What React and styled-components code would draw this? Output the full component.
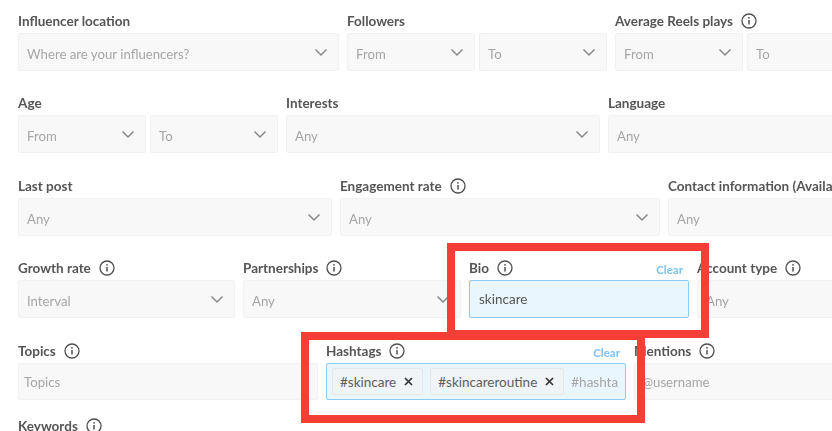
import React from 'react';
import styled, { createGlobalStyle } from 'styled-components';

const GlobalStyle = createGlobalStyle`
  html, body {
    margin: 0;
    padding: 0;
    width: 832px;
    height: 431px;
    overflow: hidden;
    background: #fff;
  }
  body {
    font-family: Lato, "Noto Sans", sans-serif;
  }
`;

const Page = styled.div`
  position: relative;
  width: 832px;
  height: 431px;
  overflow: hidden;
  padding: 12px 0 0 18px;
  box-sizing: border-box;
  display: flex;
  flex-direction: column;
  filter: blur(0.4px);
`;

const Row = styled.div`
  display: flex;
  flex: none;
  gap: 8px;
  height: ${props => props.$height}px;
`;

const Field = styled.div`
  flex: 0 0 ${props => props.$width}px;
  min-width: 0;
  display: flex;
  flex-direction: column;
`;

const LabelRow = styled.div`
  height: 21px;
  flex: none;
  padding-bottom: 3px;
  box-sizing: border-box;
  display: flex;
  align-items: center;
  justify-content: space-between;
`;

const LabelText = styled.span`
  display: flex;
  align-items: center;
  gap: 8px;
  font-size: 13.5px;
  font-weight: 700;
  color: #555;
  white-space: nowrap;
`;

const ClearLink = styled.span`
  font-size: 11.5px;
  font-weight: 700;
  color: #7cc3f6;
  margin: 2px 6px 0 0;
`;

const Pair = styled.div`
  display: grid;
  grid-template-columns: 1fr 1fr;
  gap: 4px;
`;

const Box = styled.div`
  height: ${props => props.$height || 38}px;
  flex: none;
  min-width: 0;
  box-sizing: border-box;
  display: flex;
  align-items: center;
  justify-content: space-between;
  padding: ${props => (props.$height || props.$active ? 0 : 3)}px 10px 0 ${props => props.$inset || 8}px;
  background: ${props => (props.$active ? '#eaf6fe' : '#f8f8f8')};
  border: 1px solid ${props => (props.$active ? '#8ccbf5' : '#f1f1f1')};
  border-radius: 2px;
  font-size: ${props => (props.$active ? 13.5 : 13.2)}px;
  color: ${props => (props.$active ? '#555' : '#a6a6a6')};
  overflow: hidden;
  white-space: nowrap;
`;

const ChipBox = styled(Box)`
  justify-content: flex-start;
  gap: 7px;
  padding: 0 6px 0 5px;
`;

const Chip = styled.span`
  display: inline-flex;
  align-items: center;
  gap: 8px;
  flex: none;
  height: 27px;
  padding: 0 9px 0 7px;
  box-sizing: border-box;
  background: #f0f4f6;
  border: 1px solid #e4e8ea;
  border-radius: 2px;
  color: #5a5f63;
`;

const Ghost = styled.span`
  flex: 1;
  min-width: 0;
  overflow: hidden;
  color: #a6a6a6;
`;

const Highlight = styled.div`
  position: absolute;
  box-sizing: border-box;
  border: 8px solid #f33f36;
  left: ${props => props.$x}px;
  top: ${props => props.$y}px;
  width: ${props => props.$w}px;
  height: ${props => props.$h}px;
`;

const ChevronIcon = styled.svg`
  flex: none;
  margin-bottom: 3px;
`;

const Info = () => (
  <svg width="16" height="16" viewBox="0 0 16 16" fill="none">
    <circle cx="8" cy="8" r="7" stroke="#4f4f4f" strokeWidth="1.3" />
    <circle cx="8" cy="4.8" r="0.9" fill="#4f4f4f" />
    <path d="M8 7v4.6" stroke="#4f4f4f" strokeWidth="1.5" />
  </svg>
);

const Chevron = () => (
  <ChevronIcon width="14" height="9" viewBox="0 0 14 9" fill="none">
    <path d="M1.5 1.5 7 7l5.5-5.5" stroke="#888" strokeWidth="1.5" />
  </ChevronIcon>
);

const Cross = () => (
  <svg width="9" height="9" viewBox="0 0 9 9" fill="none">
    <path d="M1 1l7 7M8 1L1 8" stroke="#333" strokeWidth="1.7" />
  </svg>
);

const Label = ({ text, info, clear }) => (
  <LabelRow>
    <LabelText>
      {text}
      {info && <Info />}
    </LabelText>
    {clear && <ClearLink>Clear</ClearLink>}
  </LabelRow>
);

const Select = ({ text, noArrow, ...rest }) => (
  <Box {...rest}>
    {text}
    {!noArrow && <Chevron />}
  </Box>
);

const App = () => (
  <>
    <GlobalStyle />
    <Page>
      <Row $height={82}>
        <Field $width={321}>
          <Label text="Influencer location" />
          <Select text="Where are your influencers?" />
        </Field>
        <Field $width={260}>
          <Label text="Followers" />
          <Pair>
            <Select text="From" />
            <Select text="To" />
          </Pair>
        </Field>
        <Field $width={260}>
          <Label text="Average Reels plays" info />
          <Pair>
            <Select text="From" />
            <Select text="To" />
          </Pair>
        </Field>
      </Row>
      <Row $height={83}>
        <Field $width={260}>
          <Label text="Age" />
          <Pair>
            <Select text="From" />
            <Select text="To" />
          </Pair>
        </Field>
        <Field $width={314}>
          <Label text="Interests" />
          <Select text="Any" />
        </Field>
        <Field $width={314}>
          <Label text="Language" />
          <Select text="Any" noArrow />
        </Field>
      </Row>
      <Row $height={82}>
        <Field $width={314}>
          <Label text="Last post" />
          <Select text="Any" />
        </Field>
        <Field $width={320}>
          <Label text="Engagement rate" info />
          <Select text="Any" />
        </Field>
        <Field $width={320}>
          <Label text="Contact information (Available)" />
          <Select text="Any" noArrow />
        </Field>
      </Row>
      <Row $height={83}>
        <Field $width={217}>
          <Label text="Growth rate" info />
          <Select text="Interval" />
        </Field>
        <Field $width={218}>
          <Label text="Partnerships" info />
          <Select text="Any" />
        </Field>
        <Field $width={220}>
          <Label text="Bio" info clear />
          <Select text="skincare" noArrow $active $inset={9} />
        </Field>
        <Field $width={220}>
          <Label text="Account type" info />
          <Select text="Any" noArrow />
        </Field>
      </Row>
      <Row $height={75}>
        <Field $width={300}>
          <Label text="Topics" info />
          <Select text="Topics" noArrow $height={37} $inset={5} />
        </Field>
        <Field $width={300}>
          <Label text="Hashtags" info clear />
          <ChipBox $active $height={37}>
            <Chip>#skincare <Cross /></Chip>
            <Chip>#skincareroutine <Cross /></Chip>
            <Ghost>#hashtag</Ghost>
          </ChipBox>
        </Field>
        <Field $width={300}>
          <Label text="Mentions" info />
          <Select text="@username" noArrow $height={37} $inset={7} />
        </Field>
      </Row>
      <Row $height={40}>
        <Field $width={300}>
          <Label text="Keywords" info />
        </Field>
      </Row>
      <Highlight $x={447} $y={243} $w={262} $h={95} />
      <Highlight $x={301} $y={332} $w={344} $h={91} />
    </Page>
  </>
);

export default App;
